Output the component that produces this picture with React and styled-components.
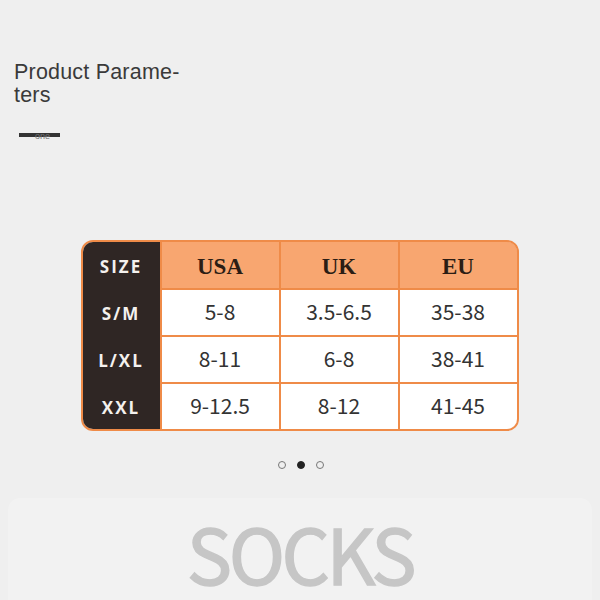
import React from 'react'
import styled, { createGlobalStyle } from 'styled-components'

const GlobalStyle = createGlobalStyle`
  html, body {
    margin: 0;
    padding: 0;
    background: #efefef;
  }
  body {
    font-family: "Liberation Sans", Arial, sans-serif;
  }
`;

const Page = styled.div`
  width: 600px;
  height: 600px;
  overflow: hidden;
  display: flex;
  flex-direction: column;
`;

const Header = styled.div`
  padding: 61px 0 0 14px;
  width: 200px;
`;

const Title = styled.div`
  font-size: 21.5px;
  line-height: 23px;
  letter-spacing: 0.2px;
  color: #3a3a3a;
`;

const Underline = styled.div`
  position: relative;
  margin: 26px 0 0 5px;
  width: 41px;
  height: 4px;
  background: #333;
`;

const Faint = styled.span`
  position: absolute;
  left: 16px;
  top: -1px;
  font-size: 9px;
  line-height: 9px;
  color: #777;
`;

const TableWrap = styled.div`
  display: flex;
  justify-content: center;
  margin-top: 103px;
`;

const Table = styled.div`
  display: flex;
  width: 434px;
  border: 2px solid #ef8b48;
  border-radius: 12px;
  overflow: hidden;
  margin-left: -1px;
`;

const SizeCol = styled.div`
  width: 77px;
  background: #2f2624;
  display: grid;
  grid-template-rows: 46px 45px 45px 45px;
  row-gap: 2px;
`;

const SizeCell = styled.div`
  display: flex;
  align-items: center;
  justify-content: center;
  padding-top: 2px;
  color: #f4f1ee;
  font-family: "Open Sans", "Noto Sans", sans-serif;
  font-weight: 700;
  font-size: 17px;
  letter-spacing: 2px;
`;

const Grid = styled.div`
  flex: 1;
  display: grid;
  grid-template-columns: 1fr 1fr 1fr;
  grid-template-rows: 46px 45px 45px 45px;
  gap: 2px;
  padding-left: 2px;
  background: #ef8b48;
`;

const HeadCell = styled.div`
  display: flex;
  align-items: center;
  justify-content: center;
  padding-top: 3px;
  background: #f8a670;
  color: #2b1d14;
  font-family: "Liberation Serif", "Times New Roman", serif;
  font-weight: 700;
  font-size: 23px;
`;

const Cell = styled.div`
  display: flex;
  align-items: center;
  justify-content: center;
  padding-bottom: 4px;
  background: #ffffff;
  color: #333;
  font-family: "Noto Sans CJK SC", "Noto Sans", sans-serif;
  font-size: 21px;
`;

const Dots = styled.div`
  display: flex;
  justify-content: center;
  gap: 11px;
  margin-top: 30px;
  margin-left: 1px;
`;

const Dot = styled.span`
  width: 8px;
  height: 8px;
  box-sizing: border-box;
  border-radius: 50%;
  border: 1.5px solid ${p => (p.active ? '#222' : '#777')};
  background: ${p => (p.active ? '#222' : 'transparent')};
`;

const Banner = styled.div`
  margin: 29px 8px 0;
  flex: 1;
  background: #f2f2f2;
  border-radius: 12px 12px 0 0;
  display: flex;
  justify-content: center;
`;

const BannerText = styled.div`
  font-family: "Noto Sans CJK SC", "Noto Sans", sans-serif;
  font-weight: 400;
  font-size: 76px;
  line-height: 76px;
  color: #c6c6c6;
  -webkit-text-stroke: 1.4px #c6c6c6;
  letter-spacing: -3.5px;
  margin-top: 16px;
`;

const sizes = ['SIZE', 'S/M', 'L/XL', 'XXL'];
const heads = ['USA', 'UK', 'EU'];
const rows = [
  ['5-8', '3.5-6.5', '35-38'],
  ['8-11', '6-8', '38-41'],
  ['9-12.5', '8-12', '41-45'],
];

export default function App() {
  return (
    <Page>
      <GlobalStyle />
      <Header>
        <Title>Product Parame-<br />ters</Title>
        <Underline><Faint>one</Faint></Underline>
      </Header>
      <TableWrap>
        <Table>
          <SizeCol>
            {sizes.map(s => <SizeCell key={s}>{s}</SizeCell>)}
          </SizeCol>
          <Grid>
            {heads.map(h => <HeadCell key={h}>{h}</HeadCell>)}
            {rows.map((r, i) => r.map((v, j) => <Cell key={i + '-' + j}>{v}</Cell>))}
          </Grid>
        </Table>
      </TableWrap>
      <Dots>
        <Dot />
        <Dot active />
        <Dot />
      </Dots>
      <Banner>
        <BannerText>SOCKS</BannerText>
      </Banner>
    </Page>
  )
}
